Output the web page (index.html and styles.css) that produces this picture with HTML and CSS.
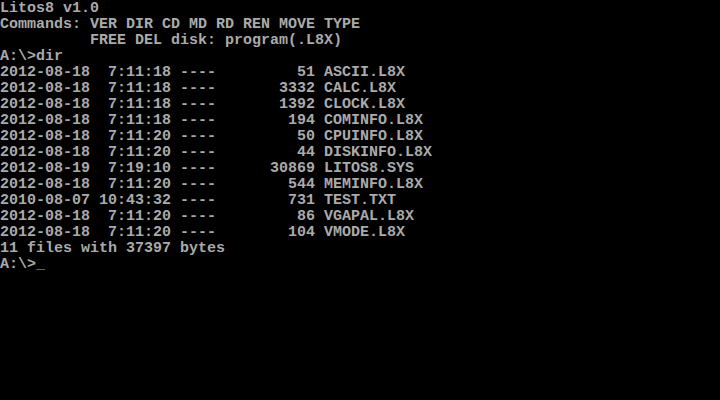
FILE: index.html
```html
<!DOCTYPE html>
<html lang="en">
<head>
    <meta charset="UTF-8">
    <meta name="viewport" content="width=device-width, initial-scale=1.0">
    <title>Litos8</title>
    <link rel="stylesheet" href="styles.css">
</head>
<body>

<div class="screen">
<pre class="console">Litos8 v1.0
Commands: VER DIR CD MD RD REN MOVE TYPE
          FREE DEL disk: program(.L8X)
A:\&gt;dir
2012-08-18  7:11:18 ----         51 ASCII.L8X
2012-08-18  7:11:18 ----       3332 CALC.L8X
2012-08-18  7:11:18 ----       1392 CLOCK.L8X
2012-08-18  7:11:18 ----        194 COMINFO.L8X
2012-08-18  7:11:20 ----         50 CPUINFO.L8X
2012-08-18  7:11:20 ----         44 DISKINFO.L8X
2012-08-19  7:19:10 ----      30869 LITOS8.SYS
2012-08-18  7:11:20 ----        544 MEMINFO.L8X
2010-08-07 10:43:32 ----        731 TEST.TXT
2012-08-18  7:11:20 ----         86 VGAPAL.L8X
2012-08-18  7:11:20 ----        104 VMODE.L8X
11 files with 37397 bytes
A:\&gt;_</pre>
</div>

</body>
</html>
```

FILE: styles.css
```css
html, body {
    margin: 0;
    padding: 0;
    background-color: #000;
}
.screen {
    width: 720px;
    height: 400px;
    overflow: hidden;
    background-color: #000;
}
.console {
    margin: 0;
    padding-top: 1px;
    font-family: "Liberation Mono", "DejaVu Sans Mono", monospace;
    font-size: 15px;
    font-weight: bold;
    line-height: 16px;
    color: #aaaaaa;
    white-space: pre;
}
```
